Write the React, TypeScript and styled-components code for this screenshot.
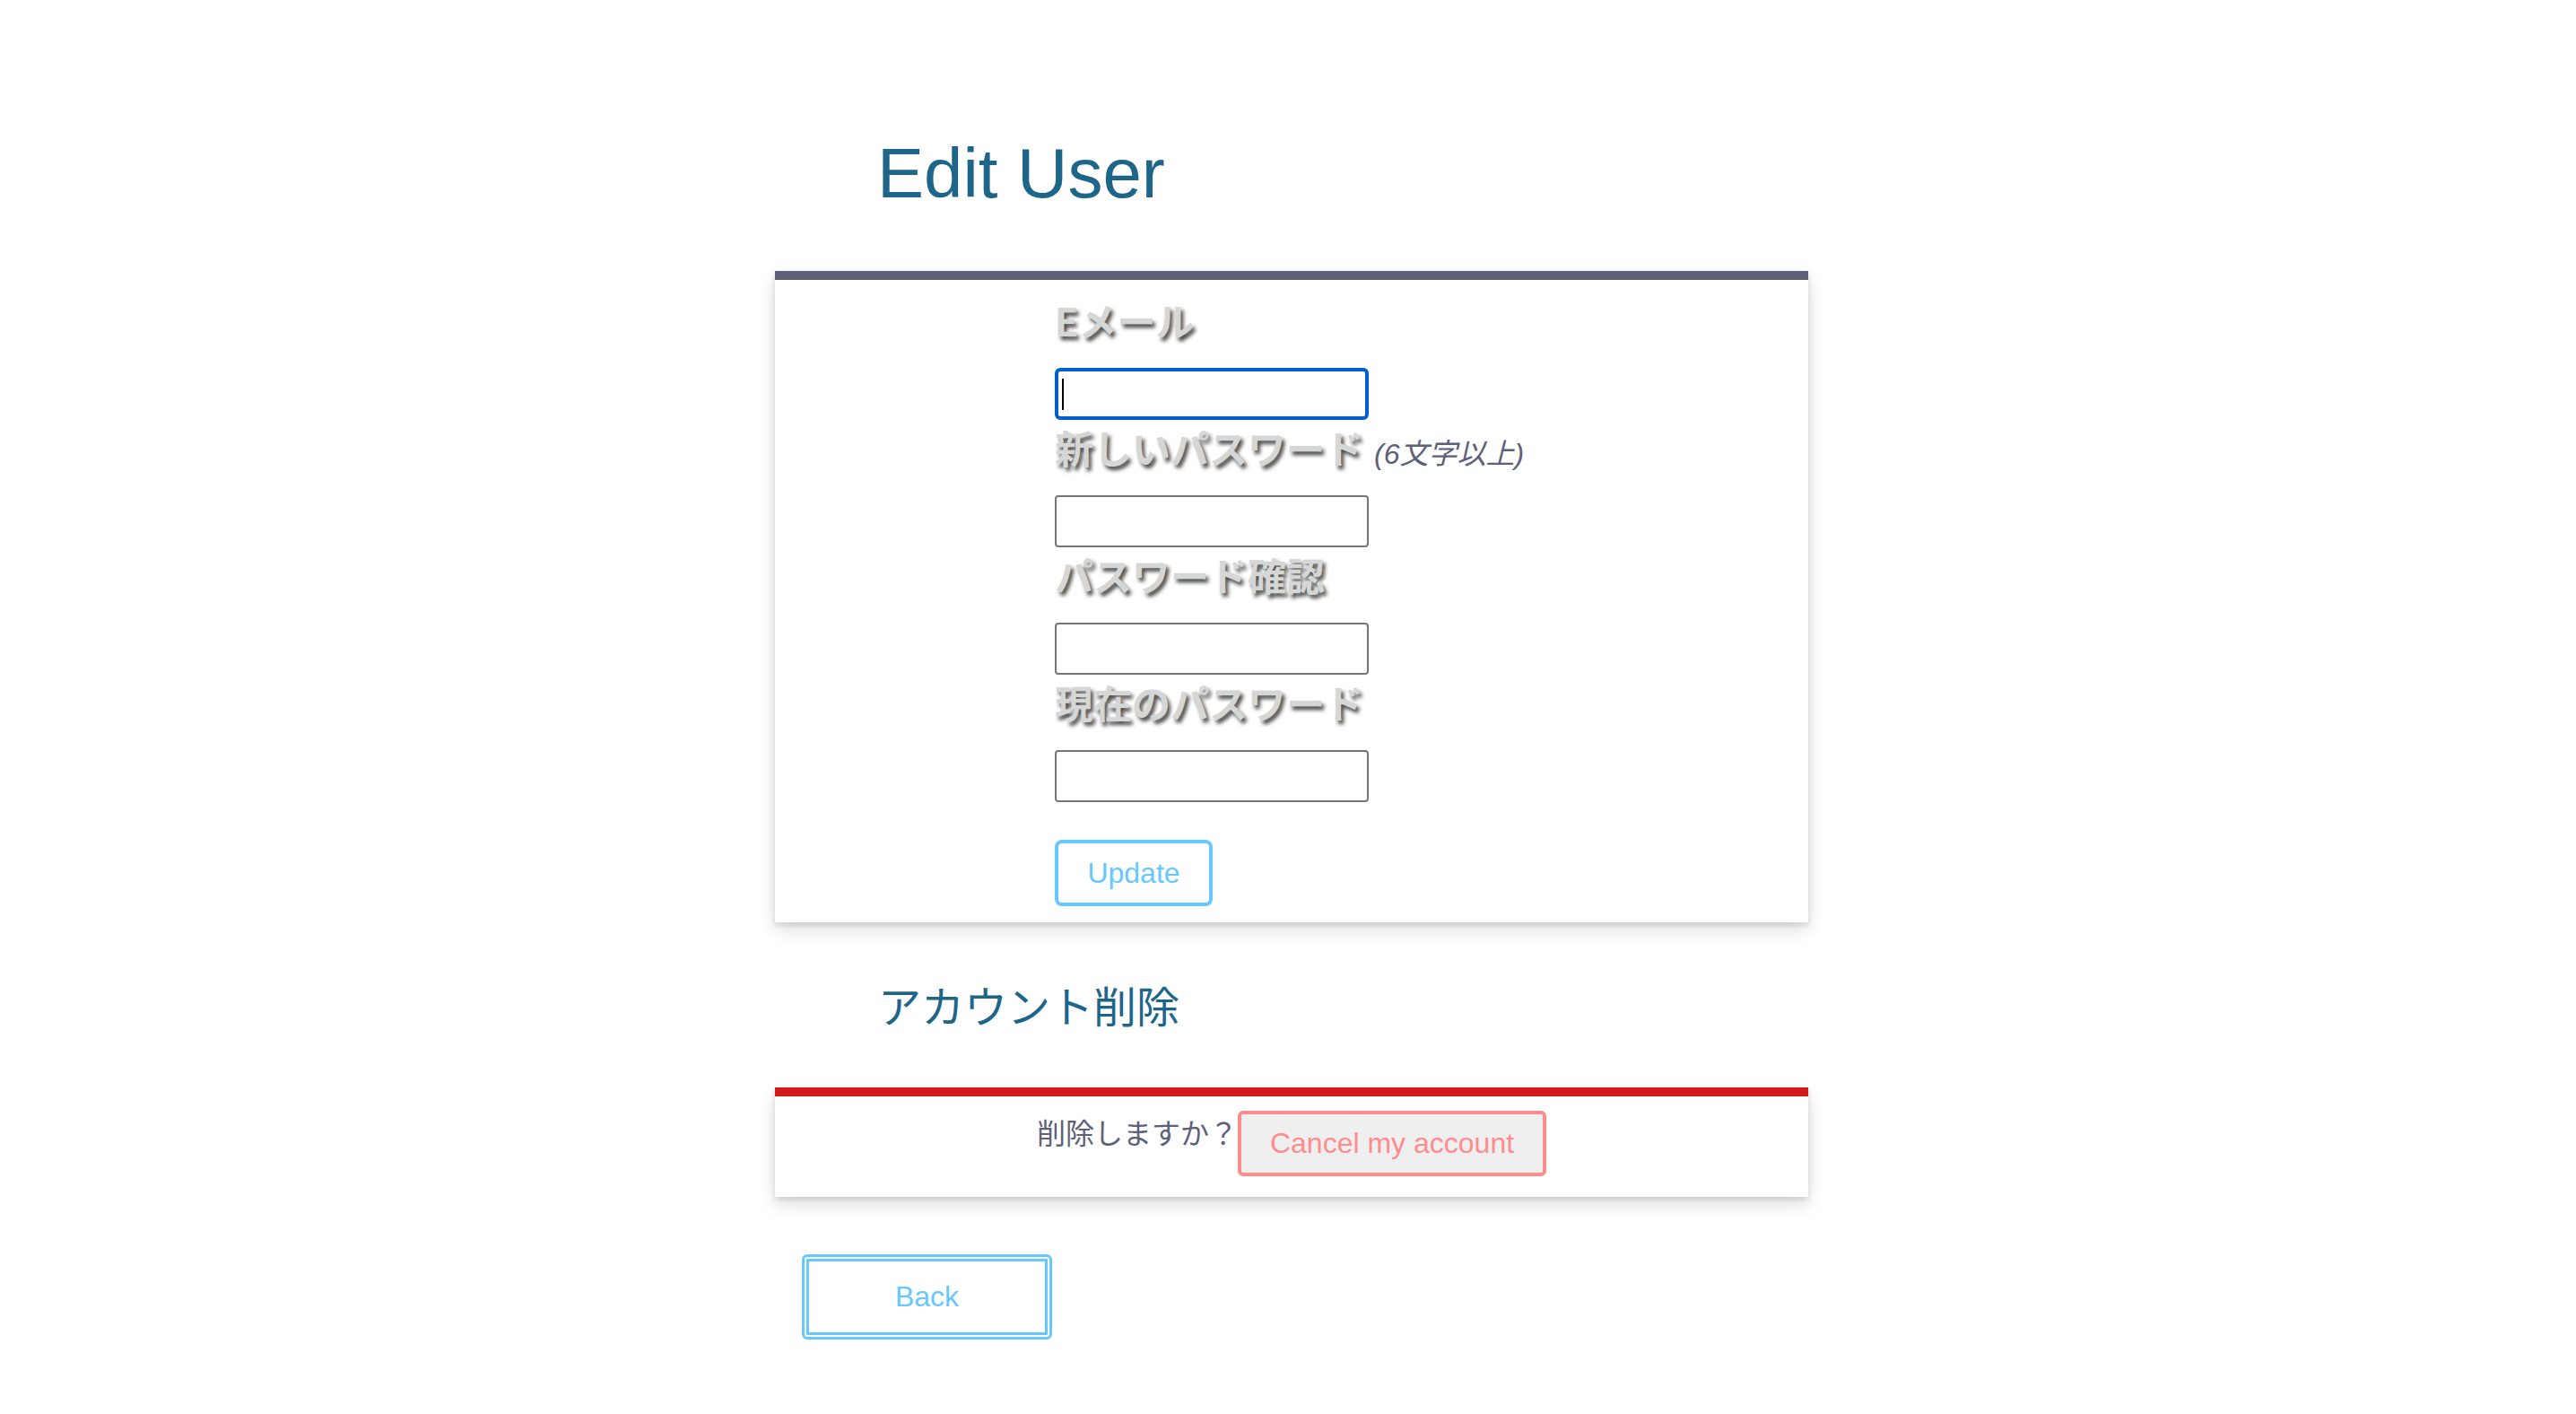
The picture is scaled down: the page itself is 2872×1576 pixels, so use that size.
import React from "react";
import styled, { createGlobalStyle } from "styled-components";

const GlobalStyle = createGlobalStyle`
  html, body {
    margin: 0;
    padding: 0;
    background: #ffffff;
  }
  body {
    font-family: "Liberation Sans", "Noto Sans CJK JP", sans-serif;
  }
  * { box-sizing: border-box; }
`;

const Page = styled.div`
  padding: 0 0 40px 8px;
`;

const Container = styled.main`
  width: 1152px;
  margin: 0 auto;
`;

const Title = styled.h1`
  margin: 0 0 62px;
  padding: 146px 0 0 114px;
  font-family: "Liberation Sans", Arial, sans-serif;
  font-size: 78px;
  line-height: 94px;
  font-weight: 400;
  color: #1d6689;
`;

const Card = styled.section<{ $accent: string; $pad: string }>`
  background: #ffffff;
  border-top: 10px solid ${(p) => p.$accent};
  padding: ${(p) => p.$pad};
  box-shadow: 0 8px 18px rgba(0, 0, 0, 0.14), 0 3px 6px rgba(0, 0, 0, 0.1);
`;

const Form = styled.form`
  display: flex;
  flex-direction: column;
  align-items: flex-start;
`;

const Field = styled.div`
  display: flex;
  flex-direction: column;
  align-items: flex-start;
`;

const LabelRow = styled.div`
  display: flex;
  align-items: baseline;
  gap: 12px;
  height: 60px;
  margin-bottom: 24px;
  white-space: nowrap;
`;

const Label = styled.label`
  font-family: "Noto Sans CJK JP", "Liberation Sans", sans-serif;
  font-size: 43px;
  line-height: 60px;
  font-weight: 700;
  color: #d4d7d6;
  text-shadow: 3px 4px 4px rgba(0, 0, 0, 0.72);
`;

const Hint = styled.em`
  font-family: "Liberation Sans", "Noto Sans CJK JP", sans-serif;
  font-size: 32px;
  line-height: 60px;
  font-style: italic;
  color: #5d6079;
`;

const InputWrap = styled.div`
  position: relative;
`;

const TextInput = styled.input<{ $active?: boolean }>`
  display: block;
  width: 350px;
  height: 58px;
  margin: 0;
  padding: 0 8px;
  font-size: 32px;
  font-family: "Liberation Sans", sans-serif;
  background: #ffffff;
  outline: none;
  border: ${(p) => (p.$active ? "4px solid #005fcc" : "2px solid #767676")};
  border-radius: ${(p) => (p.$active ? "6px" : "4px")};
`;

const Caret = styled.span`
  position: absolute;
  left: 8px;
  top: 12px;
  width: 2px;
  height: 35px;
  background: #000000;
`;

const OutlineButton = styled.button<{ $w: number; $h: number }>`
  width: ${(p) => p.$w}px;
  height: ${(p) => p.$h}px;
  padding: 0;
  background: #ffffff;
  color: #66c8ff;
  border: 4px solid #66c8ff;
  border-radius: 8px;
  font-family: "Liberation Sans", Arial, sans-serif;
  font-size: 32px;
  cursor: pointer;
`;

const UpdateButton = styled(OutlineButton)`
  margin-top: 42px;
`;

const SectionTitle = styled.h2`
  margin: 55px 0 57px;
  padding-left: 115px;
  font-family: "Noto Sans CJK JP", sans-serif;
  font-size: 48px;
  line-height: 72px;
  font-weight: 400;
  color: #1d6689;
`;

const ConfirmRow = styled.div`
  display: flex;
  justify-content: center;
  align-items: flex-start;
`;

const ConfirmText = styled.span`
  font-family: "Noto Sans CJK JP", sans-serif;
  font-size: 32px;
  line-height: 46px;
  color: #5d6079;
`;

const CancelButton = styled.button`
  width: 344px;
  height: 73px;
  padding: 0;
  background: #efefef;
  color: #ff8c8c;
  border: 4px solid #ff8c8c;
  border-radius: 6px;
  font-family: "Liberation Sans", Arial, sans-serif;
  font-size: 32px;
  cursor: pointer;
`;

const BackButton = styled(OutlineButton)`
  display: block;
  margin: 64px 0 0 30px;
  border: 8px double #66c8ff;
  border-radius: 6px;
`;

const fields = [
  { label: "Eメール", type: "email", active: true },
  { label: "新しいパスワード", hint: "(6文字以上)", type: "password" },
  { label: "パスワード確認", type: "password" },
  { label: "現在のパスワード", type: "password" },
];

export default function App() {
  return (
    <>
      <GlobalStyle />
      <Page>
        <Container>
          <Title>Edit User</Title>
          <Card $accent="#5d6079" $pad="14px 0 18px 312px">
            <Form onSubmit={(e) => e.preventDefault()}>
              {fields.map((f) => (
                <Field key={f.label}>
                  <LabelRow>
                    <Label>{f.label}</Label>
                    {f.hint && <Hint>{f.hint}</Hint>}
                  </LabelRow>
                  <InputWrap>
                    <TextInput type={f.type} $active={f.active} />
                    {f.active && <Caret />}
                  </InputWrap>
                </Field>
              ))}
              <UpdateButton type="submit" $w={176} $h={74}>
                Update
              </UpdateButton>
            </Form>
          </Card>
          <SectionTitle>アカウント削除</SectionTitle>
          <Card $accent="#d5191b" $pad="16px 0 23px">
            <ConfirmRow>
              <ConfirmText>削除しますか？</ConfirmText>
              <CancelButton type="button">Cancel my account</CancelButton>
            </ConfirmRow>
          </Card>
          <BackButton type="button" $w={279} $h={95}>
            Back
          </BackButton>
        </Container>
      </Page>
    </>
  );
}
